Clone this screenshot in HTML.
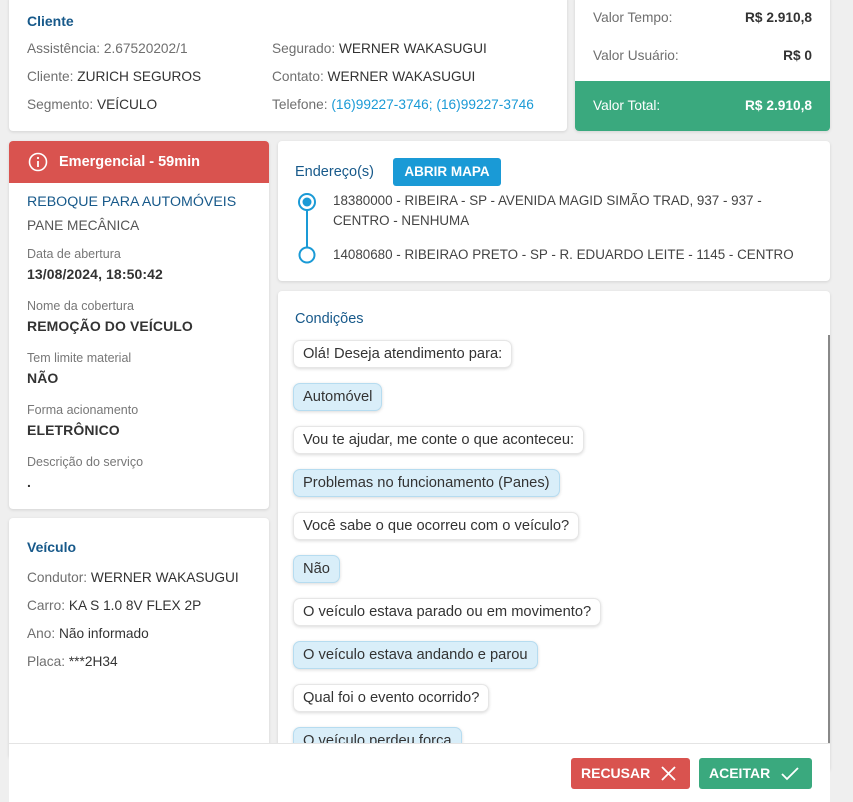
<!DOCTYPE html>
<html><head><meta charset="utf-8"><style>
*{margin:0;padding:0;box-sizing:border-box}
body{width:853px;height:802px;background:#efefef;font-family:"Liberation Sans",sans-serif;font-size:13.7px;color:#333;position:relative;overflow:hidden}
.card{position:absolute;background:#fff;border-radius:4px;box-shadow:0 1px 3px rgba(0,0,0,.12)}
.a{position:absolute;white-space:nowrap}
.t{color:#17598a;font-size:14px;font-weight:bold}
.l{color:#6f6f6f}
.lnk{color:#1a9ad6}
.sm{font-size:12.5px;color:#777}
.v{font-size:14px;color:#333;font-weight:bold;letter-spacing:.1px}
.b{position:absolute;left:293px;height:28px;padding:0 9px;line-height:27px;border-radius:7px;font-size:14.7px;color:#333;background:#fff;border:1px solid #e6e6e6;box-shadow:0 1px 3px rgba(0,0,0,.15);white-space:nowrap}
.bl{background:#d9eef9;border-color:#b6dcf0}
</style></head><body>
<div class="card" style="left:9px;top:-4px;width:558px;height:135px">
 <div class="a t" style="left:18px;top:17px">Cliente</div>
 <div class="a" style="left:18px;top:45px"><span class="l">Assistência:</span> <span class="l">2.67520202/1</span></div>
 <div class="a" style="left:18px;top:73px"><span class="l">Cliente:</span> ZURICH SEGUROS</div>
 <div class="a" style="left:18px;top:101px"><span class="l">Segmento:</span> VEÍCULO</div>
 <div class="a" style="left:263px;top:45px"><span class="l">Segurado:</span> WERNER WAKASUGUI</div>
 <div class="a" style="left:263px;top:73px"><span class="l">Contato:</span> WERNER WAKASUGUI</div>
 <div class="a" style="left:263px;top:101px"><span class="l">Telefone:</span> <span class="lnk">(16)99227-3746; (16)99227-3746</span></div>
</div>
<div class="card" style="left:575px;top:-4px;width:255px;height:135px;overflow:hidden">
 <div class="a l" style="left:18px;top:14px">Valor Tempo:</div>
 <div class="a" style="right:18px;top:14px;font-weight:bold">R$ 2.910,8</div>
 <div class="a l" style="left:18px;top:52px">Valor Usuário:</div>
 <div class="a" style="right:18px;top:52px;font-weight:bold">R$ 0</div>
 <div class="a" style="left:0;top:85px;width:255px;height:50px;background:#3aa97e"></div>
 <div class="a" style="left:18px;top:102px;color:#fff">Valor Total:</div>
 <div class="a" style="right:18px;top:102px;color:#fff;font-weight:bold">R$ 2.910,8</div>
</div>
<div class="card" style="left:9px;top:141px;width:260px;height:368px;overflow:hidden">
 <div class="a" style="left:0;top:0;width:260px;height:42px;background:#d9534f"></div>
 <svg class="a" style="left:19px;top:11px" width="20" height="20" viewBox="0 0 20 20"><circle cx="10" cy="10" r="8.5" fill="none" stroke="#fff" stroke-width="1.6"/><line x1="10" y1="9" x2="10" y2="15" stroke="#fff" stroke-width="1.8"/><circle cx="10" cy="6" r="1.1" fill="#fff"/></svg>
 <div class="a" style="left:50px;top:13px;color:#fff;font-weight:bold;font-size:14.5px">Emergencial - 59min</div>
 <div class="a" style="left:18px;top:53px;color:#17598a;font-size:14.2px">REBOQUE PARA AUTOMÓVEIS</div>
 <div class="a" style="left:18px;top:77px;color:#555">PANE MECÂNICA</div>
 <div class="a sm" style="left:18px;top:106px">Data de abertura</div>
 <div class="a v" style="left:18px;top:125px">13/08/2024, 18:50:42</div>
 <div class="a sm" style="left:18px;top:158px">Nome da cobertura</div>
 <div class="a v" style="left:18px;top:177px">REMOÇÃO DO VEÍCULO</div>
 <div class="a sm" style="left:18px;top:210px">Tem limite material</div>
 <div class="a v" style="left:18px;top:229px">NÃO</div>
 <div class="a sm" style="left:18px;top:262px">Forma acionamento</div>
 <div class="a v" style="left:18px;top:281px">ELETRÔNICO</div>
 <div class="a sm" style="left:18px;top:314px">Descrição do serviço</div>
 <div class="a v" style="left:18px;top:333px">.</div>
</div>
<div class="card" style="left:9px;top:518px;width:260px;height:240px">
 <div class="a t" style="left:18px;top:21px">Veículo</div>
 <div class="a" style="left:18px;top:52px"><span class="l">Condutor:</span> WERNER WAKASUGUI</div>
 <div class="a" style="left:18px;top:80px"><span class="l">Carro:</span> KA S 1.0 8V FLEX 2P</div>
 <div class="a" style="left:18px;top:108px"><span class="l">Ano:</span> Não informado</div>
 <div class="a" style="left:18px;top:136px"><span class="l">Placa:</span> ***2H34</div>
</div>
<div class="card" style="left:278px;top:141px;width:552px;height:140px">
 <div class="a t" style="left:17px;top:23px;font-weight:normal;font-size:14.5px">Endereço(s)</div>
 <div class="a" style="left:115px;top:17px;width:108px;height:28px;background:#1a9ad6;border-radius:3px;color:#fff;font-weight:bold;font-size:13.5px;line-height:28px;text-align:center">ABRIR MAPA</div>
 <svg class="a" style="left:19px;top:51px" width="22" height="74"><circle cx="10" cy="10" r="8" fill="none" stroke="#1a9ad6" stroke-width="2"/><circle cx="10" cy="10" r="4.5" fill="#1a9ad6"/><line x1="10" y1="18" x2="10" y2="55" stroke="#1a9ad6" stroke-width="2"/><circle cx="10" cy="63" r="7.5" fill="#fff" stroke="#1a9ad6" stroke-width="2"/></svg>
 <div class="a" style="left:55px;top:52px;color:#444;font-size:13.4px">18380000 - RIBEIRA - SP - AVENIDA MAGID SIMÃO TRAD, 937 - 937 -</div>
 <div class="a" style="left:55px;top:72px;color:#444;font-size:13.4px">CENTRO - NENHUMA</div>
 <div class="a" style="left:55px;top:106px;color:#444;font-size:13.4px">14080680 - RIBEIRAO PRETO - SP - R. EDUARDO LEITE - 1145 - CENTRO</div>
</div>
<div class="card" style="left:278px;top:291px;width:552px;height:480px;overflow:hidden">
 <div class="a t" style="left:17px;top:20px;font-weight:normal;font-size:14.5px">Condições</div>
 <div class="a" style="left:550px;top:44px;width:1.5px;height:420px;background:#888"></div>
</div>
<div class="b" style="top:340px">Olá! Deseja atendimento para:</div>
<div class="b bl" style="top:383px">Automóvel</div>
<div class="b" style="top:426px">Vou te ajudar, me conte o que aconteceu:</div>
<div class="b bl" style="top:469px">Problemas no funcionamento (Panes)</div>
<div class="b" style="top:512px">Você sabe o que ocorreu com o veículo?</div>
<div class="b bl" style="top:555px">Não</div>
<div class="b" style="top:598px">O veículo estava parado ou em movimento?</div>
<div class="b bl" style="top:641px">O veículo estava andando e parou</div>
<div class="b" style="top:684px">Qual foi o evento ocorrido?</div>
<div class="b bl" style="top:727px">O veículo perdeu força</div>
<div class="a" style="left:9px;top:743px;width:821px;height:59px;background:#fff;border-top:1px solid #e4e4e4"></div>
<div class="a" style="left:571px;top:758px;width:119px;height:31px;background:#d9534f;border-radius:3px;color:#fff;font-weight:bold;font-size:14px;line-height:31px;padding-left:10px">RECUSAR<svg style="position:absolute;left:90px;top:8px" width="15" height="15"><path d="M1 1L14 14M14 1L1 14" stroke="#fff" stroke-width="1.8"/></svg></div>
<div class="a" style="left:699px;top:758px;width:113px;height:31px;background:#3aa97e;border-radius:3px;color:#fff;font-weight:bold;font-size:14px;line-height:31px;padding-left:10px">ACEITAR<svg style="position:absolute;left:82px;top:8px" width="18" height="15"><path d="M1 8L6 13L17 2" fill="none" stroke="#fff" stroke-width="1.8"/></svg></div>
</body></html>
